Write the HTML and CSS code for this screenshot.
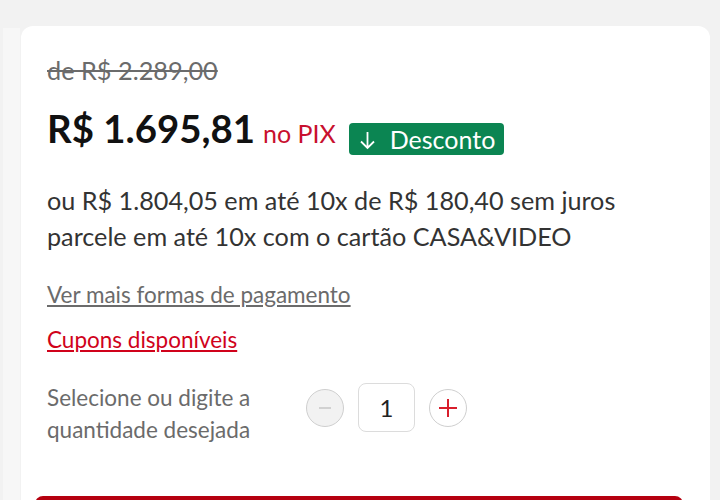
FILE: index.html
```html
<!DOCTYPE html>
<html lang="pt-BR">
<head>
<meta charset="utf-8">
<link rel="stylesheet" href="styles.css">
</head>
<body>
<div class="page">
  <div class="stub"></div>
  <section class="card">
    <div class="old-price">de R$ 2.289,00</div>
    <div class="price-row">
      <span class="price">R$ 1.695,81</span>
      <span class="pix">no PIX</span>
      <span class="badge"><svg class="arrow" width="17" height="19" viewBox="0 0 17 19"><path d="M8.5 1v16M2 10.5l6.5 6.5 6.5-6.5" fill="none" stroke="#fff" stroke-width="1.8"/></svg>Desconto</span>
    </div>
    <p class="install">ou R$ 1.804,05 em até 10x de R$ 180,40 sem juros<br>parcele em até 10x com o cartão CASA&amp;VIDEO</p>
    <a class="more" href="#">Ver mais formas de pagamento</a>
    <a class="coupons" href="#">Cupons disponíveis</a>
    <div class="qty-row">
      <div class="qty-label">Selecione ou digite a<br>quantidade desejada</div>
      <div class="qty">
        <button class="circle minus" aria-label="diminuir"><svg width="16" height="16" viewBox="0 0 16 16"><path d="M2 8h12" stroke="#c8c8c8" stroke-width="1.6"/></svg></button>
        <div class="num">1</div>
        <button class="circle plus" aria-label="aumentar"><svg width="22" height="22" viewBox="0 0 22 22"><path d="M2 11h18M11 2v18" stroke="#d81e2c" stroke-width="2"/></svg></button>
      </div>
    </div>
    <div class="buy"></div>
  </section>
</div>
</body>
</html>
```

FILE: styles.css
```css
html, body {
  margin: 0;
  padding: 0;
  background: #f2f2f2;
  font-family: Lato, "Liberation Sans", sans-serif;
}
.page {
  display: flex;
  align-items: flex-start;
  padding-top: 26px;
  height: 474px;
  overflow: hidden;
}
.stub {
  width: 17px;
  margin-left: 3px;
  margin-top: 2px;
  height: 500px;
  background: #f7f7f7;
}
.card {
  margin-left: 1px;
  width: 689px;
  height: 520px;
  box-sizing: border-box;
  background: #fff;
  border-radius: 12px;
  padding: 31px 26px 0 26px;
  display: flex;
  flex-direction: column;
  align-items: flex-start;
}
.old-price {
  font-size: 25.3px;
  line-height: 26px;
  color: #6b6b6b;
  text-decoration: line-through;
}
.price-row {
  display: flex;
  align-items: baseline;
  margin-top: 23px;
}
.price {
  font-size: 38.4px;
  font-weight: 700;
  color: #111;
  line-height: 44px;
}
.pix {
  font-size: 25px;
  color: #c8102e;
  margin-left: 8px;
}
.badge {
  margin-left: 13px;
  background: #0b8552;
  color: #fff;
  font-size: 25px;
  line-height: 32px;
  height: 32px;
  padding: 0 9px 0 10px;
  border-radius: 4px;
  align-self: center;
  position: relative;
  top: 11px;
  display: flex;
  align-items: center;
}
.arrow {
  margin-right: 14px;
  margin-top: 2px;
}
.install {
  margin: 32px 0 0 0;
  font-size: 25.2px;
  line-height: 36px;
  color: #333;
}
.more {
  margin-top: 28px;
  font-size: 22.5px;
  line-height: 26px;
  color: #6b6b6b;
}
.coupons {
  margin-top: 19px;
  font-size: 22.5px;
  line-height: 26px;
  color: #d0021b;
}
.qty-row {
  display: flex;
  align-items: flex-start;
  margin-top: 29px;
}
.qty-label {
  font-size: 22.5px;
  line-height: 32px;
  color: #6b6b6b;
  width: 259px;
}
.qty {
  display: flex;
  align-items: center;
  margin-top: 1px;
}
.circle {
  width: 38px;
  height: 38px;
  box-sizing: border-box;
  border-radius: 50%;
  border: 1px solid #cfcfcf;
  padding: 0;
  display: flex;
  align-items: center;
  justify-content: center;
}
.minus { background: #f2f2f2; margin-right: 14px; }
.plus { background: #fff; margin-left: 14px; }
.num {
  width: 57px;
  height: 49px;
  box-sizing: border-box;
  border: 1px solid #dcdcdc;
  border-radius: 8px;
  display: flex;
  align-items: center;
  justify-content: center;
  font-size: 24px;
  color: #222;
}
.buy {
  margin-top: 50px;
  margin-left: -12px;
  width: 648px;
  height: 40px;
  background: #b5000f;
  border-radius: 8px;
}
```
